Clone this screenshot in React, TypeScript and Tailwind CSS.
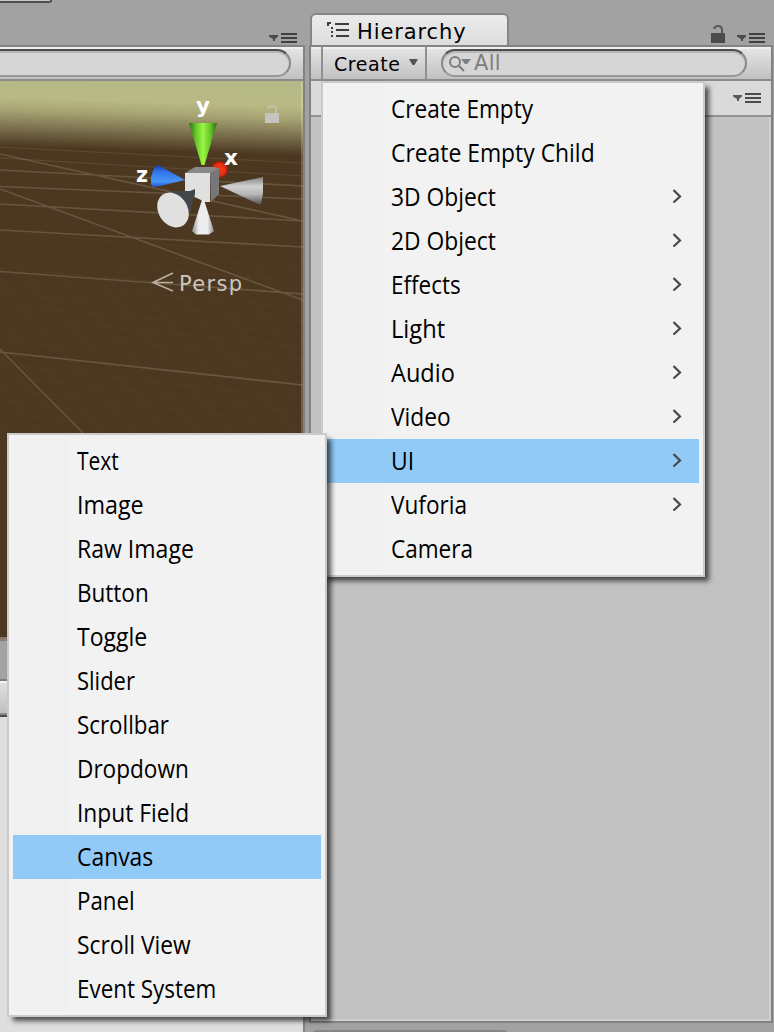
import React from "react";

type Item = { label: string; width: number; sub?: boolean };

const createItems: Item[] = [
  { label: "Create Empty", width: 142 },
  { label: "Create Empty Child", width: 204 },
  { label: "3D Object", width: 105, sub: true },
  { label: "2D Object", width: 105, sub: true },
  { label: "Effects", width: 70, sub: true },
  { label: "Light", width: 54, sub: true },
  { label: "Audio", width: 64, sub: true },
  { label: "Video", width: 60, sub: true },
  { label: "UI", width: 23, sub: true },
  { label: "Vuforia", width: 76, sub: true },
  { label: "Camera", width: 82 },
];

const uiItems: Item[] = [
  { label: "Text", width: 42 },
  { label: "Image", width: 67 },
  { label: "Raw Image", width: 117 },
  { label: "Button", width: 72 },
  { label: "Toggle", width: 70 },
  { label: "Slider", width: 58 },
  { label: "Scrollbar", width: 92 },
  { label: "Dropdown", width: 112 },
  { label: "Input Field", width: 112 },
  { label: "Canvas", width: 76 },
  { label: "Panel", width: 58 },
  { label: "Scroll View", width: 114 },
  { label: "Event System", width: 139 },
];

/* Narrows each label to its menu metrics once the font has been measured. */
function Label({ item }: { item: Item }) {
  const ref = React.useRef<HTMLSpanElement>(null);
  const [scale, setScale] = React.useState(1);
  React.useLayoutEffect(() => {
    if (ref.current) setScale(item.width / ref.current.offsetWidth);
  }, [item.width]);
  return (
    <span ref={ref} className="inline-block origin-left whitespace-pre" style={{ transform: `scaleX(${scale})` }}>
      {item.label}
    </span>
  );
}

function Menu({ items, selected, className }: { items: Item[]; selected: string; className: string }) {
  return (
    <div
      className={`absolute border-2 border-[#cacaca] bg-[#f2f2f2] p-1 font-['Open_Sans',sans-serif] text-[25px] text-black shadow-[5px_5px_5px_-1px_rgba(0,0,0,0.65)] ${className}`}
    >
      <ul className="bg-linear-to-r from-[#f0f0f0] from-[56px] to-[#f2f2f2] to-[56px]">
        {items.map((item) => (
          <li
            key={item.label}
            className={`flex h-11 items-center justify-between pr-[17px] pb-0.5 pl-16 leading-[42px] ${item.label === selected ? "bg-[#91c9f7]" : ""}`}
          >
            <Label item={item} />
            {item.sub && (
              <svg width="10" height="16" viewBox="0 0 10 16" fill="none" stroke="#484848" strokeWidth="2.2">
                <path d="M1.500 2 8 8.500l-6.500 6" />
              </svg>
            )}
          </li>
        ))}
      </ul>
    </div>
  );
}

function PaneMenuIcon({ color = "#404040" }: { color?: string }) {
  return (
    <svg width="28" height="10" viewBox="0 0 28 10" fill={color}>
      <path d="M0 2h9v1.500L6 6v2H4V6L0 3.500z" opacity=".9" />
      <path d="M12 0h16v2H12zM12 4h16v2H12zM12 8h16v2H12z" />
    </svg>
  );
}

function LockIcon({ color }: { color: string }) {
  return (
    <svg width="14" height="18" viewBox="0 0 14 18">
      <path d="M0 8h14v10H0z" fill={color} />
      <path d="M3 4Q4 1 7 1q4 0 4 4v3" fill="none" stroke={color} strokeWidth="2" opacity=".85" />
    </svg>
  );
}

const majorLines = [
  "M0 170L303 186", "M0 186.500L303 199", "M0 204L303 221", "M0 230L303 247", "M0 271.500L303 294",
  "M0 352L303 385", "M0 189L303 300", "M0 349L85 435", "M0 154L303 221",
];

const rowLines = Array.from({ length: 36 }, (_, i) => {
  const y = 232 + i * 12;
  return `M0 ${y}L303 ${y + 24 + i}`;
});
const crossLines = Array.from({ length: 17 }, (_, i) => {
  const x = -250 + i * 34;
  return `M${x} 270L${x + 230 - i * 3} 500`;
});

function Scene() {
  return (
    <svg className="h-[556px] w-[303px] shrink-0" viewBox="0 81 303 556">
      <defs>
        <linearGradient id="sky" x1="0" y1="76" x2="0" y2="146" gradientUnits="userSpaceOnUse">
          <stop offset="0" stopColor="#b5b987" />
          <stop offset=".3" stopColor="#b9b983" />
          <stop offset=".48" stopColor="#a7a474" />
          <stop offset=".74" stopColor="#7a6f4d" />
          <stop offset="1" stopColor="#4c3820" />
        </linearGradient>
        <linearGradient id="green">
          <stop offset="0" stopColor="#2f6d13" />
          <stop offset=".25" stopColor="#66c72a" />
          <stop offset=".5" stopColor="#9bf544" />
          <stop offset=".75" stopColor="#66c72a" />
          <stop offset="1" stopColor="#2f6d13" />
        </linearGradient>
        <linearGradient id="blue" x1="0" y1="0" x2="0" y2="1">
          <stop offset="0" stopColor="#1739b0" />
          <stop offset=".3" stopColor="#3272ea" />
          <stop offset=".75" stopColor="#4795f5" />
          <stop offset="1" stopColor="#2256cf" />
        </linearGradient>
        <linearGradient id="gray" x1="0" y1="0" x2="0" y2="1">
          <stop offset="0" stopColor="#808080" />
          <stop offset=".35" stopColor="#d2d2d3" />
          <stop offset=".65" stopColor="#b4b4b5" />
          <stop offset="1" stopColor="#55575a" />
        </linearGradient>
        <linearGradient id="white">
          <stop offset="0" stopColor="#8a8c92" />
          <stop offset=".3" stopColor="#eeeded" />
          <stop offset=".7" stopColor="#eeeded" />
          <stop offset="1" stopColor="#8a8c92" />
        </linearGradient>
        <radialGradient id="red">
          <stop offset="0" stopColor="#f33d1c" />
          <stop offset=".7" stopColor="#e32e12" />
          <stop offset="1" stopColor="#9b1508" />
        </radialGradient>
      </defs>
      <path d="M0 81h303v556H0z" fill="#4c3820" />
      <path d="M-10 50h340v96h-340z" fill="url(#sky)" transform="rotate(1.800 0 81)" />
      <g fill="none" stroke="#8b806a" strokeWidth="1">
        <path d={rowLines.join("")} opacity=".08" />
        <path d={crossLines.join("")} opacity=".07" />
        <path d={majorLines.join("")} strokeWidth="1.600" opacity=".42" />
        <path d="M0 147L303 163M0 158L303 176" opacity=".28" />
      </g>
      <path d="M301 81h2v556h-2z" fill="#fff" opacity=".2" />

      <circle cx="219.500" cy="169.500" r="8.500" fill="url(#red)" />
      <path d="M189 123h28l-12.500 42h-3z" fill="url(#green)" />
      <path d="M158 165l-4 3-3 9v7l2 3 7-1 25-6z" fill="url(#blue)" />
      <path d="M220 186l43-9v16l-2 11h-3z" fill="url(#gray)" />
      <path d="M185 173l10-6h20l4 2-8 5z" fill="#88888b" />
      <path d="M210 173l9-4v25l-8 8z" fill="#77777a" />
      <path d="M185 173h25v29h-5l-20-10z" fill="#e0e0e0" />
      <path d="M195 189l-5 2h-21l8 6 13 16 5-19z" fill="#43464a" />
      <ellipse cx="173" cy="210" rx="14.500" ry="18.500" fill="#e0e0e0" transform="rotate(-33 173 210)" />
      <path d="M202 200h2l10 31-5 3.500h-13l-4-3.500z" fill="url(#white)" />
      <g fill="#fff" className="font-['DejaVu_Sans',sans-serif] text-[21px] font-bold">
        <text x="196" y="113" textLength="14" lengthAdjust="spacingAndGlyphs">y</text>
        <text x="224" y="165" textLength="14" lengthAdjust="spacingAndGlyphs">x</text>
        <text x="136" y="182" textLength="12" lengthAdjust="spacingAndGlyphs">z</text>
      </g>
      <path d="M173 273l-20 9.500 20 8.500M153 282.500h20" fill="none" stroke="#b9aea0" strokeWidth="1.600" />
      <text x="179" y="291" textLength="63" fill="#cbc7c0" className="font-['DejaVu_Sans',sans-serif] text-[21px]">
        Persp
      </text>
      <path d="M265 113h14v10h-14z" fill="#c5c4be" />
      <path d="M268 109q1-3 4-3 4 0 4 4v4" fill="none" stroke="#c5c4be" strokeWidth="2" opacity=".8" />
    </svg>
  );
}

const searchField =
  "bg-[#d6d6d6] border-2 border-t-[#4e4e4e] border-r-[#888888] border-b-[#999999] shadow-[inset_0_2px_1px_#b5b5b5]";
const toolbar =
  "flex h-9 shrink-0 items-center border-y-2 border-t-[#828282] border-b-[#8b8b8b] bg-linear-to-b from-[#e6e6e6] to-[#c1c1c1] shadow-[inset_0_2px_0_#f0f0f0]";

export default function App() {
  return (
    <div className="relative flex h-[1032px] w-[774px] overflow-hidden bg-[#a2a2a2] font-['DejaVu_Sans',sans-serif]">
      <div className="flex w-[305px] shrink-0 flex-col border-r-2 border-[#828282] bg-[#a2a2a2]">
        <div className="-mr-0.5 flex h-[45px] shrink-0 justify-between bg-[#a2a2a2]">
          <div className="h-[3px] w-[52px] rounded-br-sm border-r-2 border-b-2 border-[#4e4e4e] bg-[#c5c9c5]" />
          <div className="pt-[33px] pr-2">
            <PaneMenuIcon />
          </div>
        </div>
        <div className={toolbar}>
          <div className={`h-7 w-[291px] rounded-r-full border-l-0 ${searchField}`} />
        </div>
        <Scene />
        <div className="h-1 shrink-0 border-t-2 border-b-2 border-t-[#8b765b] border-b-[#828282]" />
        <div className="h-[38px] shrink-0" />
        <div className="h-[38px] shrink-0 border-t-2 border-b-2 border-t-[#7c7c7c] border-b-[#4e4e4e] bg-linear-to-b from-[#e3e3e3] to-[#bdbdbd] shadow-[inset_0_2px_0_#f2f2f2,inset_0_-2px_0_#8b8b8b]" />
        <div className="grow bg-[#dedede]" />
      </div>

      <div className="ml-1 flex w-[464px] shrink-0 flex-col">
        <div className="flex h-[45px] shrink-0 items-end">
          <div className="ml-px flex h-8 w-[199px] shrink-0 items-center rounded-t-md border-2 border-b-0 border-[#868686] bg-linear-to-b from-[#ebebeb] to-[#dddddd] pl-[15px]">
            <svg width="23" height="18" viewBox="0 0 23 18" fill="#3d3d3d" shapeRendering="crispEdges">
              <path d="M0 1h4v2H2v2H0zM8 2h14v2H8zM4 6h2v2H4zM9 8h13v2H9zM4 10h2v2H4zM4 14h2v2H4zM9 14h13v2H9z" />
            </svg>
            <span className="mt-1 ml-[7px] text-[21px] leading-none tracking-[0.900px] text-black">Hierarchy</span>
          </div>
          <div className="ml-auto flex items-end gap-3 pb-0.5">
            <LockIcon color="#4b4b4b" />
            <PaneMenuIcon />
          </div>
          <div className="w-2" />
        </div>
        <div className="flex h-[978px] shrink-0 flex-col border-x-2 border-b-2 border-[#828282] bg-[#c2c2c2]">
          <div className={toolbar}>
            <div className="ml-2.5 flex h-8 w-[106px] items-center border-x-2 border-[#8f8f8f] pl-[11px]">
              <span className="mt-0.5 text-[19px] leading-none tracking-[0.550px] text-black">Create</span>
              <svg className="-mt-0.5 ml-[9px]" width="9" height="6" viewBox="0 0 9 6">
                <path d="M0 0h9L5.500 6h-2z" fill="#555" />
              </svg>
            </div>
            <div className={`ml-3.5 flex h-7 w-[306px] items-center rounded-full border-l-[#888888] pl-1.5 ${searchField}`}>
              <svg width="24" height="20" viewBox="0 0 24 20" fill="none" stroke="#7e7e7e" strokeWidth="2">
                <circle cx="6" cy="9" r="5" />
                <path d="M10 13l5 5" strokeWidth="2.200" />
                <path d="M12 6h10l-4 5h-2z" fill="#7e7e7e" stroke="none" />
              </svg>
              <span className="ml-px text-[21px] leading-none tracking-[0.300px] text-[#7e7e7e]">All</span>
            </div>
          </div>
          <div className="flex h-9 shrink-0 items-center justify-end border-b-2 border-[#929292] bg-[#dadada] pr-2.5">
            <PaneMenuIcon color="#4b4b4b" />
          </div>
          <div className="grow border-r-2 border-b-2 border-[#cfcfcf]" />
        </div>
        <div className="mt-[7px] ml-0.5 h-3 w-[198px] shrink-0 rounded-t-md border-2 border-[#868686] bg-[#e4e4e4]" />
      </div>

      <Menu className="top-[81px] left-[321px] w-[384px]" items={createItems} selected="UI" />
      <Menu className="top-[433px] left-[7px] w-[320px]" items={uiItems} selected="Canvas" />
    </div>
  );
}
